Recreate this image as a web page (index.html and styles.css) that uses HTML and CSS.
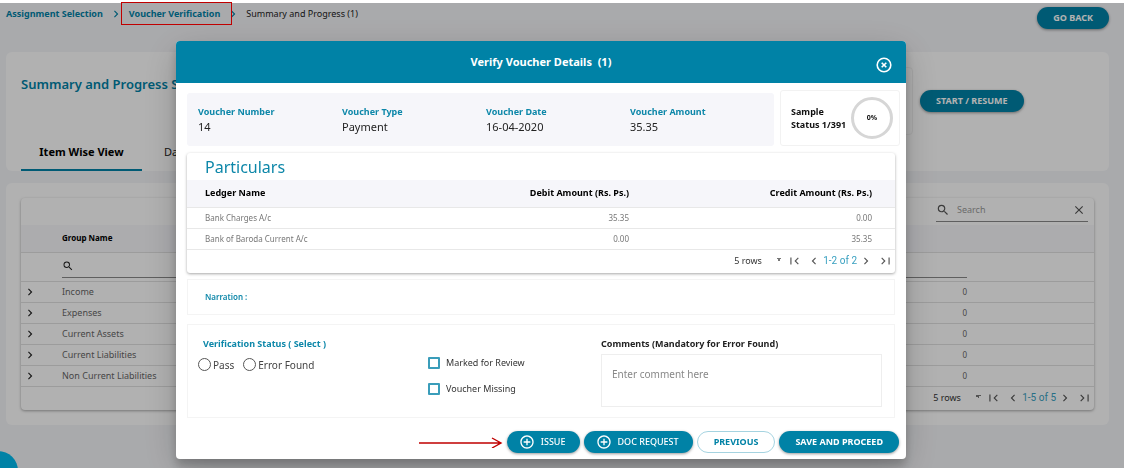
FILE: index.html
```html
<!DOCTYPE html>
<html lang="en">
<head>
    <meta charset="UTF-8">
    <meta name="viewport" content="width=device-width, initial-scale=1.0">
    <title>Voucher Verification</title>
    <link rel="stylesheet" href="styles.css">
</head>
<body>
    <svg class="sprite" aria-hidden="true">
        <symbol id="chevron-right" viewBox="0 0 24 24"><path d="M10 6L8.59 7.41 13.17 12l-4.58 4.59L10 18l6-6z"/></symbol>
        <symbol id="chevron-left" viewBox="0 0 24 24"><path d="M15.41 7.41L14 6l-6 6 6 6 1.41-1.41L10.83 12z"/></symbol>
        <symbol id="first-page" viewBox="0 0 24 24"><path d="M18.41 16.59L13.82 12l4.59-4.59L17 6l-6 6 6 6zM4 6h2v12H4z"/></symbol>
        <symbol id="last-page" viewBox="0 0 24 24"><path d="M5.59 7.41L10.18 12l-4.59 4.59L7 18l6-6-6-6zM18 6h2v12h-2z"/></symbol>
        <symbol id="search" viewBox="0 0 24 24"><path d="M15.5 14h-.79l-.28-.27A6.47 6.47 0 0 0 16 9.5 6.5 6.5 0 1 0 9.5 16c1.61 0 3.09-.59 4.23-1.57l.27.28v.79l5 4.99L20.49 19l-4.99-5zm-6 0C7.01 14 5 11.99 5 9.5S7.01 5 9.5 5 14 7.01 14 9.5 11.99 14 9.5 14z"/></symbol>
        <symbol id="close" viewBox="0 0 24 24"><path d="M19 6.41L17.59 5 12 10.59 6.41 5 5 6.41 10.59 12 5 17.59 6.41 19 12 13.41 17.59 19 19 17.59 13.41 12z"/></symbol>
        <symbol id="plus-circle" viewBox="0 0 24 24"><path d="M13 7h-2v4H7v2h4v4h2v-4h4v-2h-4V7zm-1-5C6.48 2 2 6.48 2 12s4.48 10 10 10 10-4.48 10-10S17.52 2 12 2zm0 18c-4.41 0-8-3.59-8-8s3.59-8 8-8 8 3.59 8 8-3.59 8-8 8z"/></symbol>
    </svg>

    <div class="page">
        <header class="topbar">
            <nav class="breadcrumb">
                <a href="#">Assignment Selection</a>
                <svg class="icon crumb-sep"><use href="#chevron-right"/></svg>
                <a href="#">Voucher Verification</a>
                <svg class="icon crumb-sep"><use href="#chevron-right"/></svg>
                <span>Summary and Progress (1)</span>
            </nav>
            <button class="btn" type="button">GO BACK</button>
        </header>

        <section class="panel summary">
            <div class="summary-main">
                <h1>Summary and Progress Status</h1>
                <div class="tabs">
                    <button class="tab active" type="button">Item Wise View</button>
                    <button class="tab" type="button">Daily</button>
                </div>
            </div>
            <div class="summary-box"></div>
            <div class="summary-action">
                <button class="btn" type="button">START / RESUME</button>
            </div>
        </section>

        <section class="panel groups">
            <div class="grid-card">
                <div class="toolbar">
                    <label class="search-box">
                        <svg class="icon"><use href="#search"/></svg>
                        <input type="text" placeholder="Search" aria-label="Search">
                        <svg class="icon"><use href="#close"/></svg>
                    </label>
                </div>
                <table class="group-table">
                    <thead>
                        <tr><th class="col-open"></th><th class="col-name">Group Name</th><th></th><th class="col-end"></th></tr>
                    </thead>
                    <tbody>
                        <tr class="filter-row">
                            <td></td>
                            <td class="filter-cell"><label class="filter"><svg class="icon"><use href="#search"/></svg><input type="text" aria-label="Filter group name"></label></td>
                            <td class="filter-cell"><label class="filter"><input type="text" aria-label="Filter count"></label></td>
                            <td></td>
                        </tr>
                        <tr><td class="open"><svg class="icon"><use href="#chevron-right"/></svg></td><td>Income</td><td class="num">0</td><td></td></tr>
                        <tr><td class="open"><svg class="icon"><use href="#chevron-right"/></svg></td><td>Expenses</td><td class="num">0</td><td></td></tr>
                        <tr><td class="open"><svg class="icon"><use href="#chevron-right"/></svg></td><td>Current Assets</td><td class="num">0</td><td></td></tr>
                        <tr><td class="open"><svg class="icon"><use href="#chevron-right"/></svg></td><td>Current Liabilities</td><td class="num">0</td><td></td></tr>
                        <tr><td class="open"><svg class="icon"><use href="#chevron-right"/></svg></td><td>Non Current Liabilities</td><td class="num">0</td><td></td></tr>
                    </tbody>
                </table>
                <div class="pager">
                    <select aria-label="Rows per page"><option>5 rows</option></select>
                    <button type="button" aria-label="First page"><svg class="icon"><use href="#first-page"/></svg></button>
                    <button type="button" aria-label="Previous page"><svg class="icon"><use href="#chevron-left"/></svg></button>
                    <span class="range">1-5 of 5</span>
                    <button type="button" aria-label="Next page"><svg class="icon"><use href="#chevron-right"/></svg></button>
                    <button type="button" aria-label="Last page"><svg class="icon"><use href="#last-page"/></svg></button>
                </div>
            </div>
        </section>
    </div>

    <div class="overlay">
        <div class="modal" role="dialog" aria-labelledby="modal-title">
            <header class="modal-header">
                <h2 id="modal-title">Verify Voucher Details&nbsp; (1)</h2>
                <button class="modal-close" type="button" aria-label="Close">
                    <svg viewBox="0 0 16 16"><circle cx="8" cy="8" r="6.8"/><path d="M5.7 5.7l4.6 4.6M10.3 5.7l-4.6 4.6"/></svg>
                </button>
            </header>

            <div class="modal-body">
                <div class="voucher-row">
                    <dl class="voucher-info">
                        <div><dt>Voucher Number</dt><dd>14</dd></div>
                        <div><dt>Voucher Type</dt><dd>Payment</dd></div>
                        <div><dt>Voucher Date</dt><dd>16-04-2020</dd></div>
                        <div><dt>Voucher Amount</dt><dd>35.35</dd></div>
                    </dl>
                    <div class="sample">
                        <p>Sample<br>Status 1/391</p>
                        <div class="ring">0%</div>
                    </div>
                </div>

                <section class="particulars">
                    <h3>Particulars</h3>
                    <table class="ledger">
                        <thead>
                            <tr><th>Ledger Name</th><th class="num">Debit Amount (Rs. Ps.)</th><th class="num">Credit Amount (Rs. Ps.)</th></tr>
                        </thead>
                        <tbody>
                            <tr><td>Bank Charges A/c</td><td class="num">35.35</td><td class="num">0.00</td></tr>
                            <tr><td>Bank of Baroda Current A/c</td><td class="num">0.00</td><td class="num">35.35</td></tr>
                        </tbody>
                    </table>
                    <div class="pager">
                        <select aria-label="Rows per page"><option>5 rows</option></select>
                        <button type="button" aria-label="First page"><svg class="icon"><use href="#first-page"/></svg></button>
                        <button type="button" aria-label="Previous page"><svg class="icon"><use href="#chevron-left"/></svg></button>
                        <span class="range">1-2 of 2</span>
                        <button type="button" aria-label="Next page"><svg class="icon"><use href="#chevron-right"/></svg></button>
                        <button type="button" aria-label="Last page"><svg class="icon"><use href="#last-page"/></svg></button>
                    </div>
                </section>

                <div class="narration">Narration :</div>

                <form class="verify">
                    <div class="status">
                        <h4>Verification Status ( Select )</h4>
                        <div class="radios">
                            <label><input type="radio" name="status">Pass</label>
                            <label><input type="radio" name="status">Error Found</label>
                        </div>
                    </div>
                    <div class="flags">
                        <label><input type="checkbox">Marked for Review</label>
                        <label><input type="checkbox">Voucher Missing</label>
                    </div>
                    <div class="comments">
                        <label for="comment">Comments (Mandatory for Error Found)</label>
                        <textarea id="comment" placeholder="Enter comment here"></textarea>
                    </div>
                </form>
            </div>

            <footer class="modal-footer">
                <svg class="arrow" viewBox="0 0 84 12"><path d="M0 7h82M73 2l9 5-9 5"/></svg>
                <button class="btn btn-icon" type="button"><svg class="icon"><use href="#plus-circle"/></svg>ISSUE</button>
                <button class="btn btn-icon" type="button"><svg class="icon"><use href="#plus-circle"/></svg>DOC REQUEST</button>
                <button class="btn btn-outline" type="button">PREVIOUS</button>
                <button class="btn" type="button">SAVE AND PROCEED</button>
            </footer>
        </div>
    </div>

    <div class="highlight-box"></div>
    <button class="help-button" type="button" aria-label="Help"></button>
</body>
</html>
```
FILE: styles.css
```css
* {
    margin: 0;
    padding: 0;
    box-sizing: border-box;
}

body {
    font-family: "Noto Sans", "Open Sans", sans-serif;
    font-size: 9px;
    line-height: 14px;
    color: #222;
    background: #f3f4f7;
    border-top: 3px solid #fff;
    min-height: 100vh;
    overflow: hidden;
}

button, input, select, textarea {
    font: inherit;
    color: inherit;
    border: none;
    background: none;
    outline: none;
}

.sprite {
    position: absolute;
    width: 0;
    height: 0;
}

.icon {
    width: 14px;
    height: 14px;
    fill: #555;
    flex: none;
}

/* Buttons */
.btn {
    height: 22px;
    padding: 0 16px;
    border-radius: 11px;
    background: #0082a6;
    color: #fff;
    font-weight: bold;
    white-space: nowrap;
    box-shadow: 0 1px 3px rgba(0,0,0,0.4);
}

.btn-icon {
    display: flex;
    align-items: center;
    gap: 6px;
    padding: 0 14px 0 12px;
    font-weight: 500;
}

.btn-icon .icon {
    width: 16px;
    height: 16px;
    fill: #fff;
}

.btn-outline {
    background: #fff;
    color: #0082a6;
    border: 1px solid #a5d3e0;
    box-shadow: none;
}

/* Page behind the dialog */
.page {
    padding: 4px 15px 0 6px;
}

.topbar {
    display: flex;
    justify-content: space-between;
    align-items: flex-start;
    height: 45px;
}

.breadcrumb {
    display: flex;
    align-items: center;
}

.breadcrumb a {
    color: #0082a6;
    font-weight: bold;
    text-decoration: none;
}

.crumb-sep {
    margin: 0 6px;
    fill: #0082a6;
}

.panel {
    background: #fefefe;
    border-radius: 6px;
}

.summary {
    display: flex;
    height: 119px;
    padding-left: 15px;
    margin-bottom: 12px;
}

.summary-main {
    flex: 1;
    display: flex;
    flex-direction: column;
    justify-content: space-between;
    padding-top: 22px;
}

.summary h1 {
    font-size: 13px;
    line-height: 20px;
    font-weight: 600;
    color: #0082a6;
}

.tabs {
    display: flex;
}

.tab {
    min-width: 121px;
    height: 36px;
    font-size: 11px;
    border-bottom: 2px solid transparent;
}

.tab:not(.active) {
    min-width: 0;
    padding-left: 22px;
}

.tab.active {
    color: #000;
    font-weight: bold;
    border-bottom-color: #0082a6;
}

.summary-box {
    width: 160px;
    height: 68px;
    margin-top: 15px;
    border: 1px solid #f0f0f0;
    border-radius: 4px;
}

.summary-action {
    width: 196px;
    padding: 38px 0 0 7px;
}

.groups {
    padding: 15px;
}

.grid-card {
    border-radius: 4px;
    box-shadow: 0 1px 3px rgba(0,0,0,0.35);
}

.toolbar {
    display: flex;
    justify-content: flex-end;
    height: 27px;
    padding-right: 6px;
}

.search-box {
    display: flex;
    align-items: center;
    gap: 7px;
    width: 152px;
    height: 24px;
    padding-right: 2px;
    border-bottom: 1px solid #888;
}

.search-box input {
    flex: 1;
    min-width: 0;
}

.search-box input::placeholder {
    color: #999;
}

table {
    width: 100%;
    border-collapse: collapse;
    table-layout: fixed;
}

th {
    text-align: left;
    color: #000;
    background: #f6f6fa;
}

.num {
    text-align: right;
}

.group-table th {
    height: 27px;
    font-size: 8px;
    border-bottom: 1px solid #e0e0e0;
}

.group-table td {
    height: 21px;
    color: #666;
    border-bottom: 1px solid #e0e0e0;
}

.group-table .col-open {
    width: 41px;
}

.group-table .col-name {
    width: 50%;
}

.group-table .col-end {
    width: 127px;
}

.group-table .num {
    font-size: 8px;
}

.group-table .open .icon {
    display: block;
    margin-left: 2px;
    fill: #222;
}

.group-table .filter-row td {
    height: 29px;
    vertical-align: top;
}

.filter {
    display: flex;
    align-items: center;
    height: 25px;
    padding-top: 3px;
    border-bottom: 1px solid #888;
}

.filter input {
    width: 100%;
}

.filter .icon {
    width: 12px;
    height: 12px;
    fill: #222;
}

/* Pagination */
.pager {
    display: flex;
    justify-content: flex-end;
    align-items: center;
    gap: 5px;
    height: 23px;
    padding-right: 3px;
    color: #333;
}

.pager select {
    appearance: none;
    width: 49px;
    background: linear-gradient(45deg, transparent 50%, #777 50%) 42px 4px / 3px 3px no-repeat,
                linear-gradient(-45deg, transparent 50%, #777 50%) 45px 4px / 3px 3px no-repeat;
}

.pager button {
    display: flex;
}

.pager .range {
    margin: 0 -3px;
    color: #38a0c0;
    font-family: Roboto, "Noto Sans", sans-serif;
    font-size: 10px;
}

/* Dialog */
.overlay {
    position: fixed;
    top: 3px;
    left: 0;
    right: 0;
    bottom: 0;
    display: flex;
    justify-content: center;
    align-items: flex-start;
    padding: 38px 42px 0 0;
    background: rgba(0,0,0,0.3);
}

.modal {
    width: 730px;
    max-width: 100%;
    background: #fff;
    border-radius: 4px;
    overflow: hidden;
    box-shadow: 0 7px 10px rgba(0,0,0,0.2), 0 10px 36px rgba(0,0,0,0.2);
}

.modal-header {
    display: grid;
    grid-template-columns: 1fr auto 1fr;
    align-items: center;
    height: 42px;
    padding: 0 14px;
    background: #0082a6;
    color: #fff;
}

.modal-header h2 {
    grid-column: 2;
    font-size: 11px;
    line-height: 16px;
}

.modal-close {
    justify-self: end;
    display: flex;
    padding-top: 6px;
}

.modal-close svg {
    width: 16px;
    height: 16px;
    fill: none;
    stroke: #fff;
    stroke-width: 1.6;
}

.modal-body {
    padding: 7px 11px 0;
}

.voucher-row {
    display: flex;
    align-items: flex-end;
    gap: 6px;
    margin-right: -5px;
}

.voucher-info {
    flex: 1;
    display: grid;
    grid-template-columns: repeat(4, 1fr);
    height: 53px;
    padding: 12px 0 0 11px;
    background: #f6f6fa;
    border-radius: 3px;
}

.voucher-info dt {
    color: #0d87a9;
    font-weight: bold;
}

.voucher-info dd {
    font-size: 11px;
    line-height: 16px;
}

.sample {
    display: flex;
    align-items: center;
    justify-content: space-between;
    width: 120px;
    height: 56px;
    padding: 0 6px 0 10px;
    border: 1px solid #f2f2f2;
    border-radius: 3px;
    color: #111;
}

.sample p {
    line-height: 13px;
    font-weight: bold;
    white-space: nowrap;
}

.ring {
    display: flex;
    align-items: center;
    justify-content: center;
    width: 42px;
    height: 42px;
    border: 3px solid #d6d6d6;
    border-radius: 50%;
    font-size: 7px;
    font-weight: bold;
}

.particulars {
    margin-top: 7px;
    border-radius: 3px;
    box-shadow: 0 1px 3px rgba(0,0,0,0.35);
}

.particulars h3 {
    padding: 2px 18px 0;
    height: 27px;
    font-size: 16px;
    line-height: 24px;
    font-weight: normal;
    color: #0d87a9;
}

.ledger th {
    height: 27px;
    border-bottom: 1px solid #e8e8e8;
}

.ledger td {
    height: 21px;
    font-size: 8px;
    color: #777;
    border-bottom: 1px solid #e8e8e8;
}

.ledger th:first-child,
.ledger td:first-child {
    padding-left: 18px;
    width: 222px;
}

.ledger .num {
    padding-right: 23px;
}

.narration {
    margin-top: 6px;
    padding: 10px 17px;
    border: 1px solid #f4f4f4;
    font-size: 8px;
    font-weight: 600;
    color: #0d87a9;
}

.verify {
    display: flex;
    height: 94px;
    margin-top: 9px;
    border: 1px solid #f4f4f4;
}

.verify h4 {
    padding: 12px 0 0 15px;
    font-size: 9px;
    color: #0d87a9;
}

.status {
    width: 240px;
}

.radios {
    display: flex;
    gap: 9px;
    padding: 6px 0 0 10px;
    font-size: 10px;
    line-height: 16px;
    color: #444;
}

.radios label,
.flags label {
    display: flex;
    align-items: center;
}

.radios input {
    appearance: none;
    width: 13px;
    height: 13px;
    margin-right: 2px;
    border: 1px solid #555;
    border-radius: 50%;
}

.flags {
    flex: 1;
    padding-top: 31px;
    color: #333;
}

.flags label {
    height: 14px;
    margin-bottom: 12px;
}

.flags input {
    appearance: none;
    width: 12px;
    height: 12px;
    margin-right: 6px;
    border: 2px solid #3a9dba;
    border-radius: 1px;
}

.comments {
    display: flex;
    flex-direction: column;
    width: 281px;
    margin-right: 12px;
    padding-top: 12px;
    font-weight: bold;
}

.comments textarea {
    height: 53px;
    margin-top: 3px;
    padding: 11px 10px;
    border: 1px solid #eee;
    resize: none;
    font-weight: normal;
    font-size: 10px;
    line-height: 16px;
}

.comments textarea::placeholder {
    color: #888;
}

.modal-footer {
    display: flex;
    justify-content: flex-end;
    align-items: center;
    gap: 4px;
    padding: 13px 7px 6px;
}

.arrow {
    width: 84px;
    height: 12px;
    fill: none;
    stroke: #c00000;
    stroke-width: 1.4;
}

.highlight-box {
    position: absolute;
    top: 2px;
    left: 121px;
    width: 111px;
    height: 23px;
    border: 1px solid #c00000;
    pointer-events: none;
}

.help-button {
    position: fixed;
    left: -22px;
    bottom: -23px;
    width: 40px;
    height: 40px;
    border-radius: 50%;
    background: #0082a6;
}
```
